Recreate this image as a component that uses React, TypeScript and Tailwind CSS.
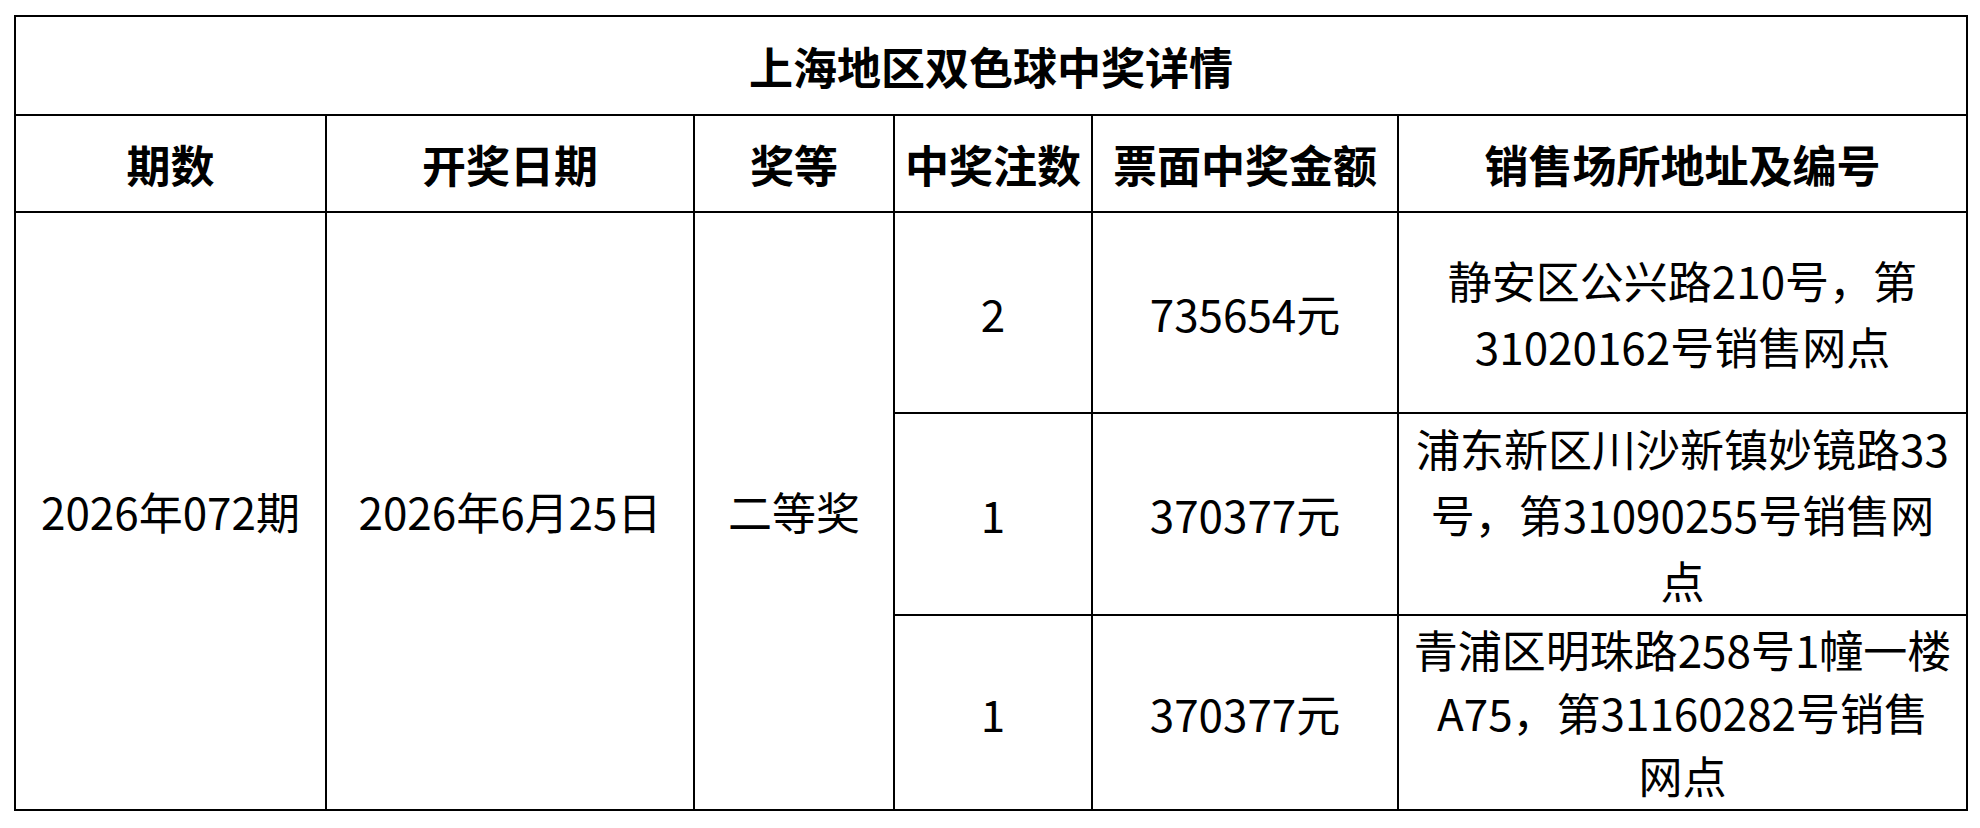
// 上海地区双色球中奖详情 table

const winners = [
  { count: "2", amount: "735654元", lines: ["静安区公兴路210号，第", "31020162号销售网点"], h: "h-[201px]", lh: "leading-[66px]" },
  { count: "1", amount: "370377元", lines: ["浦东新区川沙新镇妙镜路33", "号，第31090255号销售网", "点"], h: "h-[202px]", lh: "leading-[66px]" },
  { count: "1", amount: "370377元", lines: ["青浦区明珠路258号1幢一楼", "A75，第31160282号销售", "网点"], h: "h-[195px]", lh: "leading-[63px]" },
];

const headers = ["期数", "开奖日期", "奖等", "中奖注数", "票面中奖金额", "销售场所地址及编号"];

export default function App() {
  const cell = "border-2 border-black text-center align-middle p-0";

  return (
    <div
      className="min-h-[828px] w-[1980px] bg-white pt-[15px] pl-[14px] text-black"
      style={{ fontFamily: '"Noto Sans CJK SC", "Noto Sans", sans-serif' }}
    >
      <table className="w-[1952px] table-fixed border-collapse text-[44px] leading-[60px]">
        <colgroup>
          <col className="w-[311px]" />
          <col className="w-[368px]" />
          <col className="w-[200px]" />
          <col className="w-[198px]" />
          <col className="w-[306px]" />
          <col className="w-[569px]" />
        </colgroup>
        <thead>
          <tr className="h-[99px]">
            <th colSpan={6} className={`${cell} font-bold`}>
              上海地区双色球中奖详情
            </th>
          </tr>
          <tr className="h-[97px]">
            {headers.map((h) => (
              <th key={h} className={`${cell} font-bold whitespace-nowrap`}>
                {h}
              </th>
            ))}
          </tr>
        </thead>
        <tbody>
          {winners.map((w, i) => (
            <tr key={i} className={w.h}>
              {i === 0 && (
                <>
                  <td rowSpan={3} className={`${cell} whitespace-nowrap`}>
                    2026年072期
                  </td>
                  <td rowSpan={3} className={`${cell} whitespace-nowrap`}>
                    2026年6月25日
                  </td>
                  <td rowSpan={3} className={cell}>
                    二等奖
                  </td>
                </>
              )}
              <td className={cell}>{w.count}</td>
              <td className={cell}>{w.amount}</td>
              <td className={`${cell} whitespace-nowrap ${w.lh}`}>
                {w.lines.map((l) => (
                  <div key={l}>{l}</div>
                ))}
              </td>
            </tr>
          ))}
        </tbody>
      </table>
    </div>
  );
}
